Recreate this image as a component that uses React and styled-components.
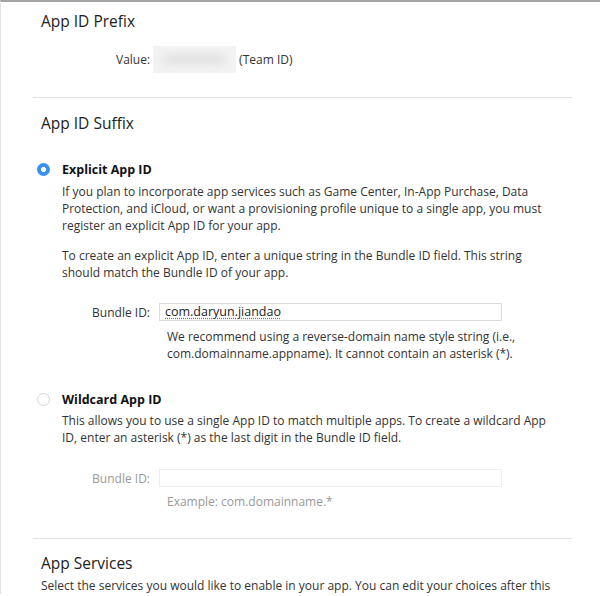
import React from 'react';
import styled, { createGlobalStyle } from 'styled-components';

const GlobalStyle = createGlobalStyle`
  html, body {
    margin: 0;
    padding: 0;
    background: #fff;
  }
  body {
    font-family: "Lucida Grande", "Open Sans", "DejaVu Sans", sans-serif;
    font-size: 12px;
    color: #333;
  }
`;

const Page = styled.div`
  border-top: 2px solid #a3a3a3;
  border-left: 1px solid #e3e3e3;
  height: 594px;
  overflow: hidden;
  box-sizing: border-box;
`;

const Heading = styled.h2`
  margin: ${p => p.$top}px 0 0;
  padding-left: 40px;
  font-size: 15.5px;
  font-weight: normal;
  line-height: 24px;
  color: #222;
`;

const Divider = styled.hr`
  margin: ${p => p.$top}px 0 0 32px;
  width: 539px;
  height: 0;
  border: 0;
  border-top: 1px solid #e2e2e2;
`;

const ValueRow = styled.div`
  display: flex;
  align-items: center;
  gap: 3px;
  margin-top: 13px;
  padding-left: 115px;
  height: 27px;
`;

const Blurred = styled.span`
  display: block;
  width: 83px;
  height: 27px;
  background: #f3f3f3;
  position: relative;
  &::after {
    content: "";
    position: absolute;
    left: 10px;
    right: 10px;
    top: 10px;
    bottom: 10px;
    background: #d9d9d9;
    filter: blur(5px);
    border-radius: 4px;
  }
`;

const Option = styled.div`
  display: grid;
  grid-template-columns: 25px 1fr;
  margin-top: ${p => p.$top}px;
  padding-left: 36px;
`;

const Radio = styled.span`
  display: block;
  width: 13px;
  height: 13px;
  margin-top: 2px;
  border-radius: 50%;
  box-sizing: border-box;
  ${p => p.$checked
    ? `background: radial-gradient(circle, #fff 0 2.2px, #3a8ff5 2.8px);`
    : `border: 1px solid #d4d4d4; background: #fff;`}
`;

const Title = styled.div`
  font-size: 12.5px;
  font-weight: bold;
  line-height: 18px;
  color: #111;
`;

const Para = styled.p`
  margin: ${p => p.$top}px 0 0;
  line-height: 17px;
  white-space: nowrap;
`;

const FieldRow = styled.div`
  display: grid;
  grid-template-columns: 88px 343px;
  column-gap: 9px;
  align-items: center;
  margin-top: ${p => p.$top}px;
  color: ${p => (p.$disabled ? '#999' : '#333')};
`;

const Label = styled.span`
  text-align: right;
`;

const Field = styled.div`
  height: 18px;
  box-sizing: border-box;
  border: 1px solid ${p => (p.$disabled ? '#eeeeee' : '#dcdcdc')};
  padding: 0 5px;
  line-height: 16px;
  font-size: 12.5px;
  color: #222;
`;

const Misspelled = styled.span`
  text-decoration: underline dotted #e0443c;
  text-underline-offset: 2px;
`;

const Hint = styled.p`
  margin: ${p => p.$top}px 0 0;
  padding-left: 105px;
  line-height: 17px;
  white-space: nowrap;
  color: ${p => (p.$muted ? '#999' : '#333')};
`;

const Intro = styled.p`
  margin: 2px 0 0;
  padding-left: 40px;
  line-height: 17px;
  white-space: nowrap;
`;

export default function App() {
  return (
    <Page>
      <GlobalStyle />
      <Heading $top={7}>App ID Prefix</Heading>
      <ValueRow>
        <span>Value:</span>
        <Blurred />
        <span>(Team ID)</span>
      </ValueRow>
      <Divider $top={24} />

      <Heading $top={13}>App ID Suffix</Heading>

      <Option $top={26}>
        <Radio $checked />
        <div>
          <Title>Explicit App ID</Title>
          <Para $top={4}>
            If you plan to incorporate app services such as Game Center, In-App Purchase, Data<br />
            Protection, and iCloud, or want a provisioning profile unique to a single app, you must<br />
            register an explicit App ID for your app.
          </Para>
          <Para $top={13}>
            To create an explicit App ID, enter a unique string in the Bundle ID field. This string<br />
            should match the Bundle ID of your app.
          </Para>
          <FieldRow $top={22}>
            <Label>Bundle ID:</Label>
            <Field>
              <Misspelled>com.daryun.jiandao</Misspelled>
            </Field>
          </FieldRow>
          <Hint $top={7}>
            We recommend using a reverse-domain name style string (i.e.,<br />
            com.domainname.appname). It cannot contain an asterisk (*).
          </Hint>
        </div>
      </Option>

      <Option $top={29}>
        <Radio />
        <div>
          <Title>Wildcard App ID</Title>
          <Para $top={3}>
            This allows you to use a single App ID to match multiple apps. To create a wildcard App<br />
            ID, enter an asterisk (*) as the last digit in the Bundle ID field.
          </Para>
          <FieldRow $top={23} $disabled>
            <Label>Bundle ID:</Label>
            <Field $disabled />
          </FieldRow>
          <Hint $top={6} $muted>Example: com.domainname.*</Hint>
        </div>
      </Option>

      <Divider $top={28} />
      <Heading $top={12}>App Services</Heading>
      <Intro>
        Select the services you would like to enable in your app. You can edit your choices after this<br />
        App ID has been registered.
      </Intro>
    </Page>
  );
}
